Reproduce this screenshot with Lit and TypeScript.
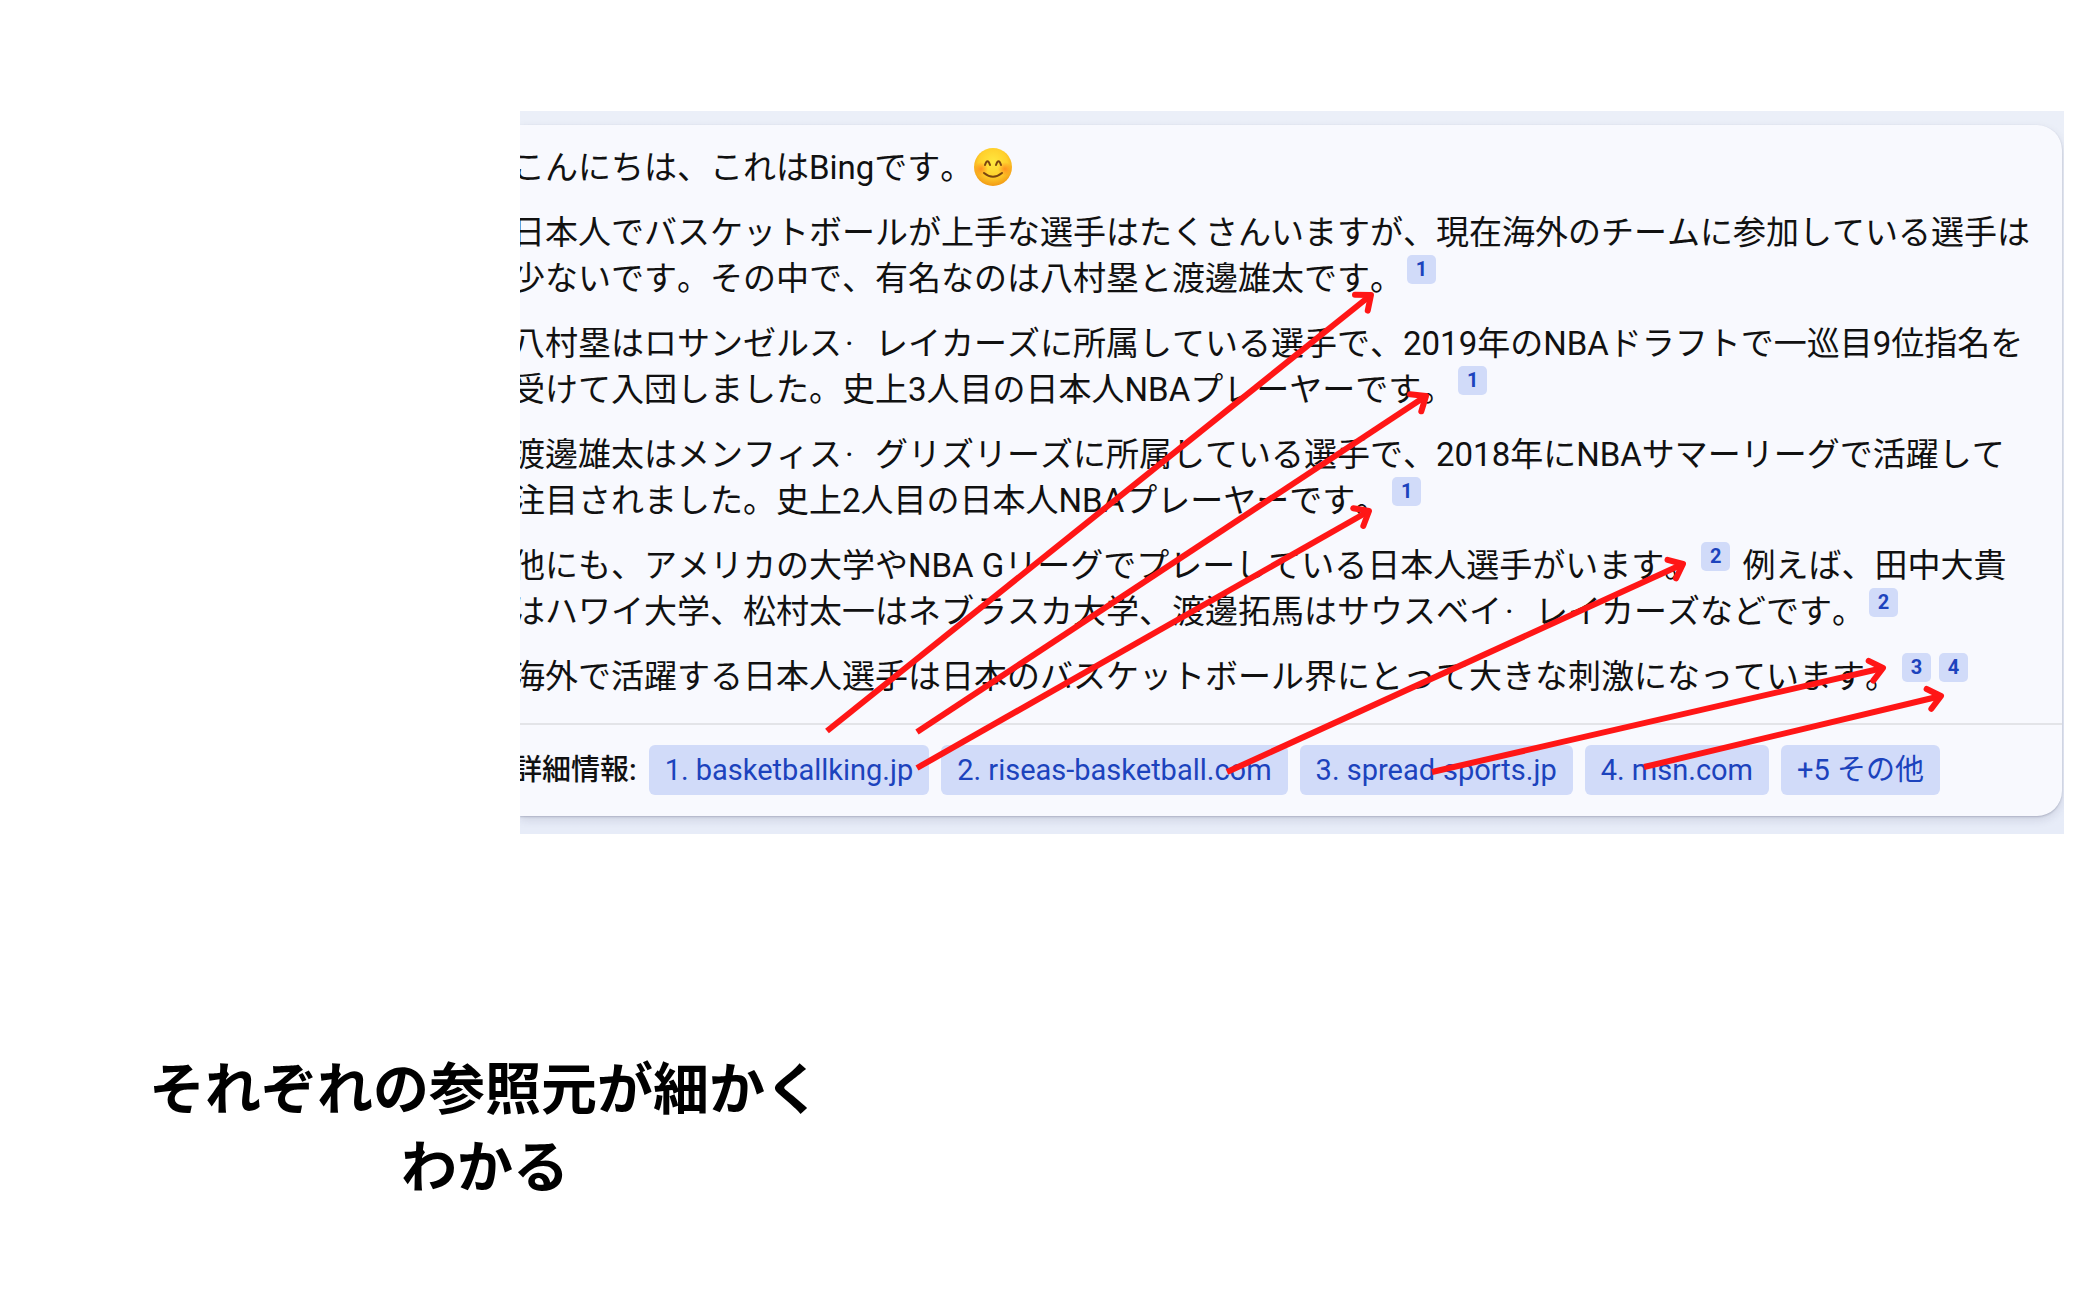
import { LitElement, html, svg, css } from "lit";
import { customElement } from "lit/decorators.js";

interface Arrow {
  from: [number, number];
  to: [number, number];
}

const SOURCES = [
  "1. basketballking.jp",
  "2. riseas-basketball.com",
  "3. spread-sports.jp",
  "4. msn.com",
];

/* Free-canvas annotation arrows, in the coordinates of the answer panel. */
const ARROWS: Arrow[] = [
  { from: [307, 620], to: [851, 184] },
  { from: [397, 621], to: [906, 285] },
  { from: [397, 657], to: [849, 400] },
  { from: [707, 661], to: [1163, 453] },
  { from: [912, 661], to: [1363, 557] },
  { from: [1124, 656], to: [1421, 585] },
];

@customElement("cite-mark")
export class CiteMark extends LitElement {
  static properties = { n: { type: Number } };
  declare n: number;

  static styles = css`
    :host {
      display: inline-block;
      vertical-align: 14px;
      line-height: 29px;
      margin: -8px 4px;
    }
    .mark {
      display: block;
      width: 29px;
      height: 29px;
      border-radius: 5px;
      background: #d1dbf9;
      color: #1c43bd;
      font: 700 20px/28px Roboto, "Liberation Sans", sans-serif;
      text-align: center;
      text-decoration: none;
    }
  `;

  render() {
    return html`<a class="mark" href="#source-${this.n}">${this.n}</a>`;
  }
}

@customElement("app-root")
export class AppRoot extends LitElement {
  static styles = css`
    :host {
      display: block;
      min-height: 100vh;
      background: #fff;
      font-family: Roboto, "Noto Sans CJK JP", sans-serif;
      color: #111;
    }
    .page {
      display: flex;
      flex-direction: column;
      gap: 212px;
      padding-top: 111px;
    }
    .panel {
      position: relative;
      overflow: hidden;
      margin: 0 36px 0 520px;
      padding: 14px 2px 18px 0;
      background: linear-gradient(#ebeff8, #e7ecf8);
    }
    .card {
      border-radius: 0 25px 25px 0;
      background: #f8f9fe;
      box-shadow: 0 1px 2px rgba(30, 35, 70, 0.22), 0 4px 10px rgba(30, 35, 70, 0.12);
    }
    .answer {
      display: flex;
      flex-direction: column;
      gap: 19px;
      margin-left: -8px;
      padding: 20px 0 23px;
      font-size: 33px;
      line-height: 46px;
      font-kerning: none;
      text-spacing-trim: space-all;
      white-space: nowrap;
    }
    .para {
      margin: 0;
    }
    .dot {
      display: inline-block;
      box-sizing: border-box;
      width: 33px;
      padding-left: 3px;
    }
    .emoji {
      width: 40px;
      height: 40px;
      margin: -4px 0;
      vertical-align: -4px;
    }
    .sources {
      display: flex;
      align-items: center;
      gap: 12px;
      margin-left: -7px;
      padding: 20px 0 21px;
      border-top: 2px solid #e3e4e8;
      font-size: 29px;
      line-height: 50px;
      white-space: nowrap;
    }
    .label {
      font-weight: 500;
    }
    .chip {
      height: 50px;
      padding: 0 16px;
      border: 0;
      border-radius: 6px;
      background: #d1dbf9;
      color: #1c43bd;
      font: inherit;
      text-decoration: none;
    }
    .arrows {
      position: absolute;
      left: 0;
      top: 0;
      width: 1544px;
      height: 723px;
      pointer-events: none;
    }
    .caption {
      margin: 0;
      width: 672px;
      padding-left: 149px;
      font: 700 56px/78px "Noto Sans CJK JP", sans-serif;
      color: #000;
      text-align: center;
    }
  `;

  private arrow({ from, to }: Arrow) {
    const back = Math.atan2(from[1] - to[1], from[0] - to[0]);
    const arm = (turn: number) => {
      const a = back + turn;
      return `${to[0] + 16 * Math.cos(a)},${to[1] + 16 * Math.sin(a)}`;
    };
    return svg`
      <line x1=${from[0]} y1=${from[1]} x2=${to[0]} y2=${to[1]} stroke-width="6"></line>
      <polyline points="${arm(0.69)} ${to[0]},${to[1]} ${arm(-0.69)}"
        stroke-width="6" stroke-linecap="round" stroke-linejoin="round"></polyline>`;
  }

  private dot() {
    return html`<span class="dot">·</span>`;
  }

  private cite(n: number) {
    return html`<cite-mark .n=${n}></cite-mark>`;
  }

  render() {
    return html`
      <main class="page" lang="ja">
        <section class="panel">
          <article class="card">
            <div class="answer">
              <p class="para">こんにちは、これはBingです。<svg class="emoji" viewBox="0 0 40 40" role="img" aria-label="😊">
                  <defs>
                    <radialGradient id="face" cx="50%" cy="38%" r="62%">
                      <stop offset="0" stop-color="#ffe83f"></stop>
                      <stop offset="0.6" stop-color="#ffd02c"></stop>
                      <stop offset="1" stop-color="#f29a15"></stop>
                    </radialGradient>
                    <radialGradient id="cheek">
                      <stop offset="0" stop-color="#ff7d1c" stop-opacity="0.75"></stop>
                      <stop offset="1" stop-color="#ff7d1c" stop-opacity="0"></stop>
                    </radialGradient>
                  </defs>
                  <circle cx="20" cy="20" r="19" fill="url(#face)"></circle>
                  <circle cx="8" cy="22" r="7" fill="url(#cheek)"></circle>
                  <circle cx="32" cy="22" r="7" fill="url(#cheek)"></circle>
                  <g fill="none" stroke="#7a4510" stroke-width="2" stroke-linecap="round">
                    <path d="M12 18Q14.500 10.500 17 18"></path>
                    <path d="M23 18Q25.500 10.500 28 18"></path>
                    <path d="M11 26Q20 33.500 29 26"></path>
                  </g>
                </svg></p>
              <p class="para">日本人でバスケットボールが上手な選手はたくさんいますが、現在海外のチームに参加している選手は<br />少ないです。その中で、有名なのは八村塁と渡邊雄太です。${this.cite(1)}</p>
              <p class="para">八村塁はロサンゼルス${this.dot()}レイカーズに所属している選手で、2019年のNBAドラフトで一巡目9位指名を<br />受けて入団しました。史上3人目の日本人NBAプレーヤーです。${this.cite(1)}</p>
              <p class="para">渡邊雄太はメンフィス${this.dot()}グリズリーズに所属している選手で、2018年にNBAサマーリーグで活躍して<br />注目されました。史上2人目の日本人NBAプレーヤーです。${this.cite(1)}</p>
              <p class="para">他にも、アメリカの大学やNBA Gリーグでプレーしている日本人選手がいます。${this.cite(2)} 例えば、田中大貴<br />はハワイ大学、松村太一はネブラスカ大学、渡邊拓馬はサウスベイ${this.dot()}レイカーズなどです。${this.cite(2)}</p>
              <p class="para">海外で活躍する日本人選手は日本のバスケットボール界にとって大きな刺激になっています。${this.cite(3)}${this.cite(4)}</p>
            </div>
            <nav class="sources">
              <span class="label">詳細情報:</span>
              ${SOURCES.map((s, i) => html`<a class="chip" id="source-${i + 1}" href="https://${s.slice(3)}">${s}</a>`)}
              <button class="chip" type="button">+5 その他</button>
            </nav>
          </article>
          <svg class="arrows" viewBox="0 0 1544 723" fill="none" stroke="#ff1616" aria-hidden="true">
            ${ARROWS.map((a) => this.arrow(a))}
          </svg>
        </section>
        <h1 class="caption">それぞれの参照元が細かく<br />わかる</h1>
      </main>
    `;
  }
}
